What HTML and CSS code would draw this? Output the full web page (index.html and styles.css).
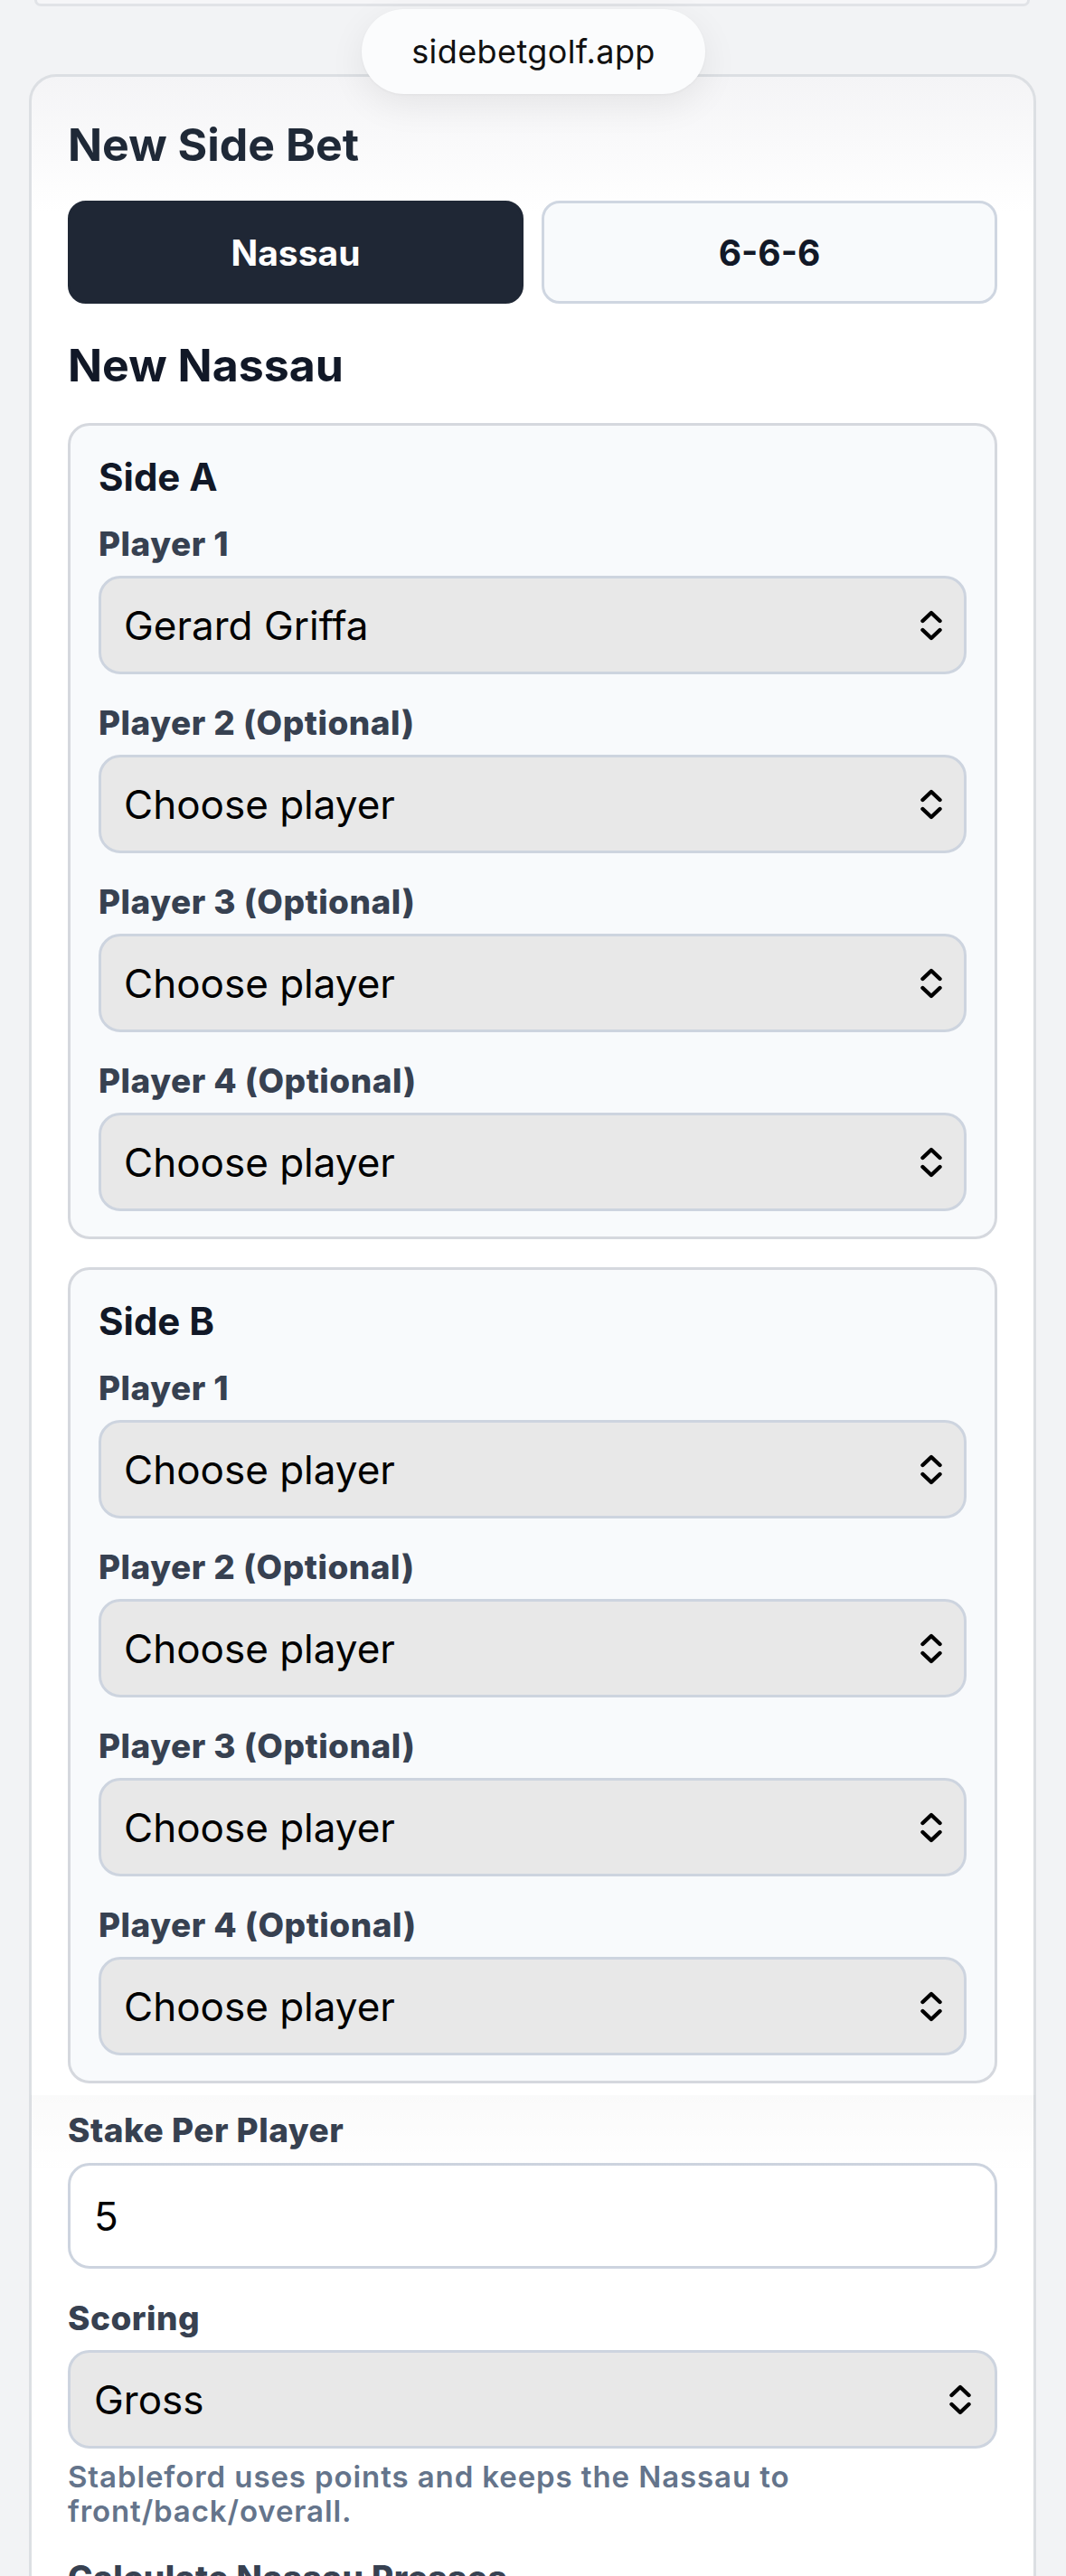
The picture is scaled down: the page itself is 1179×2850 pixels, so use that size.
FILE: index.html
```html
<!DOCTYPE html>
<html lang="en">
<head>
<meta charset="utf-8">
<title>New Side Bet</title>
<link rel="stylesheet" href="styles.css">
</head>
<body>
<div class="prev-card"></div>
<div class="url-pill">sidebetgolf.app</div>

<main class="card">
  <h2 class="title">New Side Bet</h2>
  <div class="toggle">
    <button class="toggle-btn active">Nassau</button>
    <button class="toggle-btn">6-6-6</button>
  </div>

  <h3 class="subtitle">New Nassau</h3>

  <section class="side">
    <h4 class="side-title">Side A</h4>
    <div class="field">
      <label class="label">Player 1</label>
      <div class="select"><span>Gerard Griffa</span><svg class="chev" viewBox="0 0 24 34"><path d="M2.5 12 L12 3 L21.5 12 M2.5 22 L12 31 L21.5 22"/></svg></div>
    </div>
    <div class="field">
      <label class="label">Player 2 (Optional)</label>
      <div class="select"><span>Choose player</span><svg class="chev" viewBox="0 0 24 34"><path d="M2.5 12 L12 3 L21.5 12 M2.5 22 L12 31 L21.5 22"/></svg></div>
    </div>
    <div class="field">
      <label class="label">Player 3 (Optional)</label>
      <div class="select"><span>Choose player</span><svg class="chev" viewBox="0 0 24 34"><path d="M2.5 12 L12 3 L21.5 12 M2.5 22 L12 31 L21.5 22"/></svg></div>
    </div>
    <div class="field">
      <label class="label">Player 4 (Optional)</label>
      <div class="select"><span>Choose player</span><svg class="chev" viewBox="0 0 24 34"><path d="M2.5 12 L12 3 L21.5 12 M2.5 22 L12 31 L21.5 22"/></svg></div>
    </div>
  </section>

  <section class="side">
    <h4 class="side-title">Side B</h4>
    <div class="field">
      <label class="label">Player 1</label>
      <div class="select"><span>Choose player</span><svg class="chev" viewBox="0 0 24 34"><path d="M2.5 12 L12 3 L21.5 12 M2.5 22 L12 31 L21.5 22"/></svg></div>
    </div>
    <div class="field">
      <label class="label">Player 2 (Optional)</label>
      <div class="select"><span>Choose player</span><svg class="chev" viewBox="0 0 24 34"><path d="M2.5 12 L12 3 L21.5 12 M2.5 22 L12 31 L21.5 22"/></svg></div>
    </div>
    <div class="field">
      <label class="label">Player 3 (Optional)</label>
      <div class="select"><span>Choose player</span><svg class="chev" viewBox="0 0 24 34"><path d="M2.5 12 L12 3 L21.5 12 M2.5 22 L12 31 L21.5 22"/></svg></div>
    </div>
    <div class="field">
      <label class="label">Player 4 (Optional)</label>
      <div class="select"><span>Choose player</span><svg class="chev" viewBox="0 0 24 34"><path d="M2.5 12 L12 3 L21.5 12 M2.5 22 L12 31 L21.5 22"/></svg></div>
    </div>
  </section>

  <div class="form-field stake">
    <label class="label">Stake Per Player</label>
    <div class="input">5</div>
  </div>

  <div class="form-field scoring">
    <label class="label">Scoring</label>
    <div class="select wide"><span>Gross</span><svg class="chev" viewBox="0 0 24 34"><path d="M2.5 12 L12 3 L21.5 12 M2.5 22 L12 31 L21.5 22"/></svg></div>
    <p class="help">Stableford uses points and keeps the Nassau to front/back/overall.</p>
  </div>

  <div class="form-field calc">
    <label class="label">Calculate Nassau Presses</label>
    <div class="select wide"><span>No</span><svg class="chev" viewBox="0 0 24 34"><path d="M2.5 12 L12 3 L21.5 12 M2.5 22 L12 31 L21.5 22"/></svg></div>
  </div>
</main>

<div class="toolbar-shade"></div>
</body>
</html>
```

FILE: styles.css
```css
html, body {
  margin: 0;
  padding: 0;
}

body {
  background: #f2f3f5;
  font-family: "Inter", "Noto Sans", "Liberation Sans", sans-serif;
  color: #111827;
  position: relative;
}

.prev-card {
  height: 7px;
  margin: 0 40px 0 38px;
  box-sizing: border-box;
  background: #f6f6f8;
  border: 3px solid #e1e3e7;
  border-top: none;
  border-radius: 0 0 28px 28px;
}

.url-pill {
  position: absolute;
  top: 10px;
  left: 400px;
  width: 380px;
  height: 94px;
  box-sizing: border-box;
  border-radius: 47px;
  background: #fbfcfd;
  box-shadow: 0 12px 40px rgba(0, 0, 0, 0.07), 0 1px 3px rgba(0, 0, 0, 0.04);
  display: flex;
  align-items: center;
  justify-content: center;
  font-size: 36px;
  letter-spacing: 0.4px;
  font-weight: 400;
  color: #111;
  z-index: 5;
}

.card {
  margin: 75px 33px 0 32px;
  border: 3px solid #dcdfe3;
  border-radius: 30px;
  padding: 46px 40px 60px;
  background: linear-gradient(to bottom, #f4f4f6 0px, #ffffff 150px);
}

.title {
  margin: 0;
  font-size: 50px;
  line-height: 58px;
  font-weight: 700;
  color: #1f2937;
}

.toggle {
  margin-top: 33px;
  display: grid;
  grid-template-columns: 1fr 1fr;
  gap: 20px;
}

.toggle-btn {
  height: 114px;
  box-sizing: border-box;
  border-radius: 20px;
  border: 3px solid #cfd6e1;
  background: #f8fafc;
  font-family: inherit;
  font-size: 39px;
  font-weight: 700;
  color: #111827;
  padding: 0;
}

.toggle-btn.active {
  background: #1f2735;
  border-color: #1f2735;
  color: #ffffff;
}

.subtitle {
  margin: 39px 0 0;
  font-size: 50px;
  line-height: 58px;
  font-weight: 700;
  color: #111827;
}

.side {
  margin-top: 35px;
  border: 3px solid #d5d8de;
  border-radius: 24px;
  background: #f8fafc;
  padding: 33px 31px 28px;
  display: flex;
  flex-direction: column;
  gap: 33px;
}

.side + .side {
  margin-top: 31px;
}

.side-title {
  margin: 0 0 -4px;
  font-size: 42px;
  line-height: 48px;
  font-weight: 700;
  color: #111827;
}

.field,
.form-field {
  display: flex;
  flex-direction: column;
}

.label {
  display: block;
  font-size: 37px;
  line-height: 42px;
  letter-spacing: 0.5px;
  font-weight: 800;
  color: #374151;
  margin-bottom: 14px;
}

.select {
  height: 109px;
  box-sizing: border-box;
  border: 3px solid #cdd4df;
  border-radius: 24px;
  background: #e8e8e8;
  padding: 0 24px 0 25px;
  display: flex;
  align-items: center;
  justify-content: space-between;
  font-size: 44px;
  color: #000;
}

.select.wide {
  padding: 0 26px 0 26px;
}

.chev {
  width: 24px;
  height: 34px;
  flex: none;
  fill: none;
  stroke: #000;
  stroke-width: 4.4;
  stroke-linecap: round;
  stroke-linejoin: round;
}

.stake {
  margin-top: 31px;
}

.stake .label {
  margin-bottom: 15px;
}

.input {
  height: 117px;
  box-sizing: border-box;
  border: 3px solid #cdd4df;
  border-radius: 24px;
  background: #ffffff;
  padding: 0 26px;
  display: flex;
  align-items: center;
  font-size: 44px;
  color: #000;
}

.scoring {
  margin-top: 34px;
}

.help {
  margin: 12px 0 0;
  max-width: 900px;
  font-size: 33px;
  line-height: 38px;
  letter-spacing: 0.9px;
  font-weight: 600;
  color: #64748b;
}

.calc {
  margin-top: 34px;
}

.toolbar-shade {
  position: absolute;
  top: 2318px;
  left: 34px;
  right: 34px;
  height: 90px;
  background: linear-gradient(to bottom, rgba(0, 0, 0, 0.018), rgba(0, 0, 0, 0));
  pointer-events: none;
}
```
